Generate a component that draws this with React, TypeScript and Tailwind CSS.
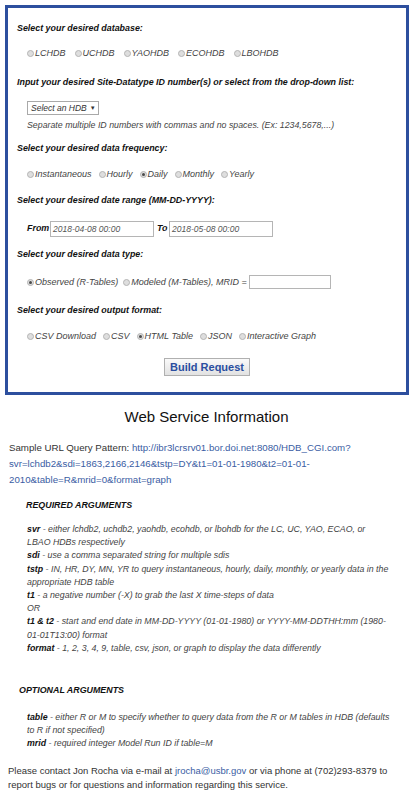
import React from "react";

const font = { fontFamily: '"Liberation Sans", Arial, sans-serif' };

function Radio({ label, checked = false }: { label: string; checked?: boolean }) {
  return (
    <span className="flex items-center">
      <span className="w-[7px] h-[7px] rounded-full border border-[#b4b4b4] bg-[#dedede] mr-[1px] flex items-center justify-center">
        {checked && <span className="w-[3px] h-[3px] rounded-full bg-[#4a4a4a]" />}
      </span>
      <span className="italic text-[9px] text-[#444] leading-[12px]">{label}</span>
    </span>
  );
}

function Heading({ children, className = "" }: { children: React.ReactNode; className?: string }) {
  return (
    <div className={"font-bold italic text-[8.9px] leading-[12px] text-[#111] " + className}>{children}</div>
  );
}

export default function App() {
  return (
    <div style={font} className="w-[413px] min-h-[796px] bg-white text-[#222]">
      <div className="pt-[5px] pl-[5px]">
        <div className="w-[404px] border-[3px] border-[#2d4f9e] pl-[9px] pt-[14px] pb-[16px]">
          <Heading>Select your desired database:</Heading>
          <div className="mt-[13px] ml-[10px] flex gap-[9px] h-[12px]">
            <Radio label="LCHDB" />
            <Radio label="UCHDB" />
            <Radio label="YAOHDB" />
            <Radio label="ECOHDB" />
            <Radio label="LBOHDB" />
          </div>
          <Heading className="mt-[17px]">
            Input your desired Site-Datatype ID number(s) or select from the drop-down list:
          </Heading>
          <div className="mt-[13px] ml-[10px]">
            <div className="w-[72px] h-[14px] border border-[#a9a9a9] bg-white flex items-center pl-[3px] text-[8.5px] italic text-[#333]">
              Select an HDB <span className="not-italic text-[6px] ml-[3px]">▼</span>
            </div>
            <div className="mt-[4px] italic text-[8.8px] leading-[12px] text-[#444]">
              Separate multiple ID numbers with commas and no spaces. (Ex: 1234,5678,...)
            </div>
          </div>
          <Heading className="mt-[11px]">Select your desired data frequency:</Heading>
          <div className="mt-[14px] ml-[10px] flex gap-[7px] h-[12px]">
            <Radio label="Instantaneous" />
            <Radio label="Hourly" />
            <Radio label="Daily" checked />
            <Radio label="Monthly" />
            <Radio label="Yearly" />
          </div>
          <Heading className="mt-[14px]">Select your desired date range (MM-DD-YYYY):</Heading>
          <div className="mt-[15px] ml-[10px] flex items-center h-[16px]">
            <span className="font-bold italic text-[8.9px] text-[#111] w-[23px]">From</span>
            <div className="w-[104px] h-[16px] border border-[#b5b5b5] flex items-center pl-[2px] italic text-[8.5px] text-[#555]">
              2018-04-08 00:00
            </div>
            <span className="font-bold italic text-[8.9px] text-[#111] ml-[3px] w-[12px]">To</span>
            <div className="w-[104px] h-[16px] border border-[#b5b5b5] flex items-center pl-[2px] italic text-[8.5px] text-[#555]">
              2018-05-08 00:00
            </div>
          </div>
          <Heading className="mt-[11px]">Select your desired data type:</Heading>
          <div className="mt-[15px] ml-[10px] flex items-center gap-[5px] h-[14px]">
            <Radio label="Observed (R-Tables)" checked />
            <span className="flex items-center">
              <Radio label="Modeled (M-Tables), MRID =" />
              <span className="ml-[2px] w-[82px] h-[14px] border border-[#b5b5b5] bg-white" />
            </span>
          </div>
          <Heading className="mt-[15px]">Select your desired output format:</Heading>
          <div className="mt-[14px] ml-[10px] flex gap-[7px] h-[12px]">
            <Radio label="CSV Download" />
            <Radio label="CSV" />
            <Radio label="HTML Table" checked />
            <Radio label="JSON" />
            <Radio label="Interactive Graph" />
          </div>
          <div className="mt-[16px] flex justify-center pr-[9px]">
            <button className="h-[18px] px-[5px] border border-[#b0b0b0] bg-gradient-to-b from-[#fafafa] to-[#e2e2e2] text-[11px] font-bold text-[#2a4ea0] leading-[16px]">
              Build Request
            </button>
          </div>
        </div>
      </div>

      <div className="mt-[13px] text-center text-[15px] leading-[18px] text-[#111]">Web Service Information</div>

      <div className="mt-[14px] pl-[9px] text-[9.7px] leading-[16px] text-[#333]">
        <span className="block">
          Sample URL Query Pattern: <span className="text-[#3a5da3]">http://ibr3lcrsrv01.bor.doi.net:8080/HDB_CGI.com?</span>
        </span>
        <span className="block text-[#3a5da3]">svr=lchdb2&amp;sdi=1863,2166,2146&amp;tstp=DY&amp;t1=01-01-1980&amp;t2=01-01-</span>
        <span className="block text-[#3a5da3]">2010&amp;table=R&amp;mrid=0&amp;format=graph</span>
      </div>

      <div className="mt-[11px] pl-[26px] font-bold italic text-[8.9px] leading-[12px] text-[#111]">REQUIRED ARGUMENTS</div>

      <div className="mt-[12px] pl-[27px] italic text-[8.8px] leading-[13.2px] text-[#444]">
        <span className="block"><b className="text-[#111]">svr</b> - either lchdb2, uchdb2, yaohdb, ecohdb, or lbohdb for the LC, UC, YAO, ECAO, or</span>
        <span className="block">LBAO HDBs respectively</span>
        <span className="block"><b className="text-[#111]">sdi</b> - use a comma separated string for multiple sdis</span>
        <span className="block"><b className="text-[#111]">tstp</b> - IN, HR, DY, MN, YR to query instantaneous, hourly, daily, monthly, or yearly data in the</span>
        <span className="block">appropriate HDB table</span>
        <span className="block"><b className="text-[#111]">t1</b> - a negative number (-X) to grab the last X time-steps of data</span>
        <span className="block">OR</span>
        <span className="block"><b className="text-[#111]">t1 &amp; t2</b> - start and end date in MM-DD-YYYY (01-01-1980) or YYYY-MM-DDTHH:mm (1980-</span>
        <span className="block">01-01T13:00) format</span>
        <span className="block"><b className="text-[#111]">format</b> - 1, 2, 3, 4, 9, table, csv, json, or graph to display the data differently</span>
      </div>

      <div className="mt-[29px] pl-[19px] font-bold italic text-[8.9px] leading-[12px] text-[#111]">OPTIONAL ARGUMENTS</div>

      <div className="mt-[15px] pl-[27px] italic text-[8.8px] leading-[13px] text-[#444]">
        <span className="block"><b className="text-[#111]">table</b> - either R or M to specify whether to query data from the R or M tables in HDB (defaults</span>
        <span className="block">to R if not specified)</span>
        <span className="block"><b className="text-[#111]">mrid</b> - required integer Model Run ID if table=M</span>
      </div>

      <div className="mt-[14px] pl-[8px] text-[9.5px] leading-[14px] text-[#333]">
        <span className="block">
          Please contact Jon Rocha via e-mail at <span className="text-[#3a5da3]">jrocha@usbr.gov</span> or via phone at (702)293-8379 to
        </span>
        <span className="block">report bugs or for questions and information regarding this service.</span>
      </div>
    </div>
  );
}
